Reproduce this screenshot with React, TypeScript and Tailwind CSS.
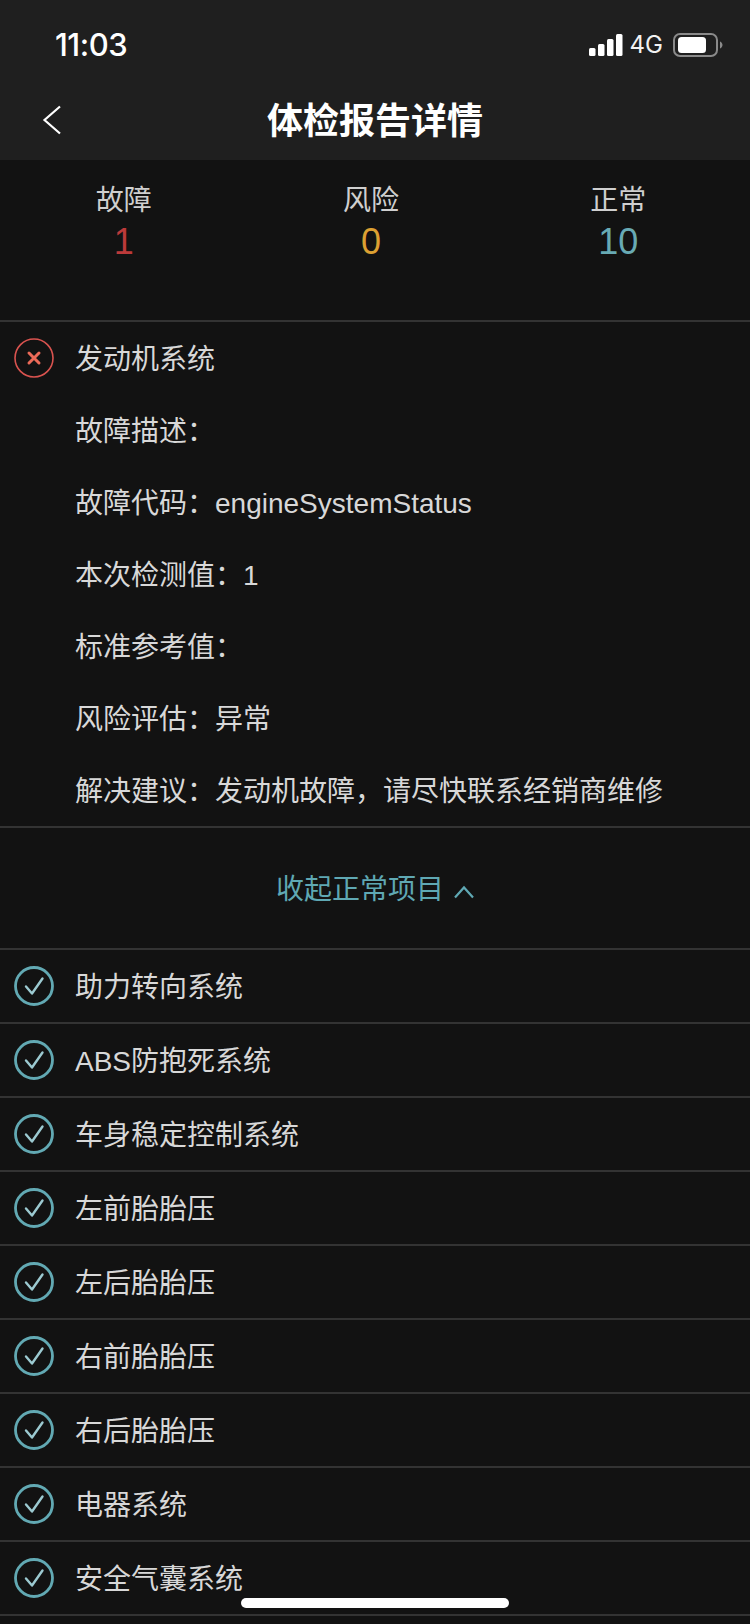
import React from 'react'

const font = { fontFamily: '"Liberation Sans", "Noto Sans CJK SC", sans-serif' }

const details = [
  { label: '故障描述：', value: '' },
  { label: '故障代码：', value: 'engineSystemStatus' },
  { label: '本次检测值：', value: '1' },
  { label: '标准参考值：', value: '' },
  { label: '风险评估：', value: '异常' },
  { label: '解决建议：', value: '发动机故障，请尽快联系经销商维修' },
]

const normalItems = [
  '助力转向系统',
  'ABS防抱死系统',
  '车身稳定控制系统',
  '左前胎胎压',
  '左后胎胎压',
  '右前胎胎压',
  '右后胎胎压',
  '电器系统',
  '安全气囊系统',
]

const SignalIcon = () => (
  <svg width="34" height="22" viewBox="0 0 34 22" fill="#fff">
    <rect x="0" y="14" width="6.500" height="8" rx="1.500" />
    <rect x="9" y="10" width="6.500" height="12" rx="1.500" />
    <rect x="18" y="5" width="6.500" height="17" rx="1.500" />
    <rect x="27" y="0" width="6.500" height="22" rx="1.500" />
  </svg>
)

const BatteryIcon = () => (
  <svg width="50" height="24" viewBox="0 0 50 24" fill="none">
    <rect x="1" y="1" width="43" height="22" rx="6" stroke="#8a8a8a" strokeWidth="2" />
    <rect x="5" y="4" width="28" height="16" rx="3.500" fill="#fff" />
    <path d="M47 8.500c1.500.6 2.500 2 2.500 3.500s-1 2.900-2.500 3.500z" fill="#8a8a8a" />
  </svg>
)

const ErrorIcon = () => (
  <svg width="40" height="40" viewBox="0 0 40 40" fill="none">
    <circle cx="20" cy="20" r="19" stroke="#d9534f" strokeWidth="1.600" />
    <path d="M15 15l10 10M25 15L15 25" stroke="#ec6a58" strokeWidth="3" strokeLinecap="round" />
  </svg>
)

const CheckIcon = () => (
  <svg width="40" height="40" viewBox="0 0 40 40" fill="none">
    <circle cx="20" cy="20" r="18.500" stroke="#62a9b3" strokeWidth="2.800" />
    <path d="M12 20.500l6 7L28.500 12.500" stroke="#9ccad1" strokeWidth="2.400" strokeLinecap="round" strokeLinejoin="round" />
  </svg>
)

export default function App() {
  return (
    <div className="relative w-[750px] h-[1624px] overflow-hidden bg-[#121212] text-[#d8d8d8]" style={font}>
      {/* Status bar + nav */}
      <div className="bg-[#1f1f1f] h-[160px]">
        <div className="flex items-center justify-between h-[88px] pl-[55px] pr-[27px] pt-[2px]">
          <span className="text-[31px] font-medium text-white tracking-[-0.5px]" style={{ fontFamily: 'Inter, sans-serif' }}>11:03</span>
          <div className="flex items-center">
            <SignalIcon />
            <span className="ml-[7px] mr-[10px] text-[24px] text-[#f2f2f2]" style={{ fontFamily: 'Inter, sans-serif' }}>4G</span>
            <BatteryIcon />
          </div>
        </div>
        <div className="relative flex items-center justify-center h-[66px]">
          <svg className="absolute left-[42px] top-[17px]" width="20" height="30" viewBox="0 0 20 30" fill="none">
            <path d="M18 1.500L2.500 15 18 28.500" stroke="#fff" strokeWidth="2.200" />
          </svg>
          <span className="text-[36px] font-bold text-white mt-[2px]">体检报告详情</span>
        </div>
      </div>

      {/* Counts */}
      <div className="grid grid-cols-3 h-[162px] pr-2 pt-[20px] border-b-2 border-[#333] text-center">
        <div>
          <div className="text-[28px] leading-[40px] text-[#cfcfcf] pt-[1px] h-[40px]">故障</div>
          <div className="text-[36px] leading-[44px] text-[#bc3a3a]">1</div>
        </div>
        <div>
          <div className="text-[28px] leading-[40px] text-[#cfcfcf] pt-[1px] h-[40px]">风险</div>
          <div className="text-[36px] leading-[44px] text-[#dca032]">0</div>
        </div>
        <div>
          <div className="text-[28px] leading-[40px] text-[#cfcfcf] pt-[1px] h-[40px]">正常</div>
          <div className="text-[36px] leading-[44px] text-[#68aab4]">10</div>
        </div>
      </div>

      {/* Fault detail */}
      <div className="border-b-2 border-[#333]">
        <div className="flex items-center h-[72px] pl-[14px] text-[28px]">
          <ErrorIcon />
          <span className="ml-[21px] mt-[4px]">发动机系统</span>
        </div>
        {details.map((d) => (
          <div key={d.label} className="flex items-center h-[72px] pl-[75px] pt-[4px] text-[28px]">
            <span>{d.label}</span>
            <span>{d.value}</span>
          </div>
        ))}
      </div>

      {/* Collapse toggle */}
      <div className="flex items-center justify-center h-[122px] border-b-2 border-[#333] pl-[1px] text-[28px] text-[#5fa8b3]">
        <span className="mt-[4px]">收起正常项目</span>
        <svg className="ml-[9px] mt-[8px]" width="22" height="14" viewBox="0 0 22 14" fill="none">
          <path d="M2 12.500L11 2.500l9 10" stroke="#5fa8b3" strokeWidth="2.200" />
        </svg>
      </div>

      {/* Normal items */}
      {normalItems.map((name) => (
        <div key={name} className="flex items-center h-[74px] pl-[14px] border-b-2 border-[#333] text-[28px]">
          <CheckIcon />
          <span className="ml-[21px] mt-[4px]">{name}</span>
        </div>
      ))}

      {/* Home indicator */}
      <div className="absolute left-[241px] top-[1598px] w-[268px] h-[10px] rounded-full bg-white" />
    </div>
  )
}
